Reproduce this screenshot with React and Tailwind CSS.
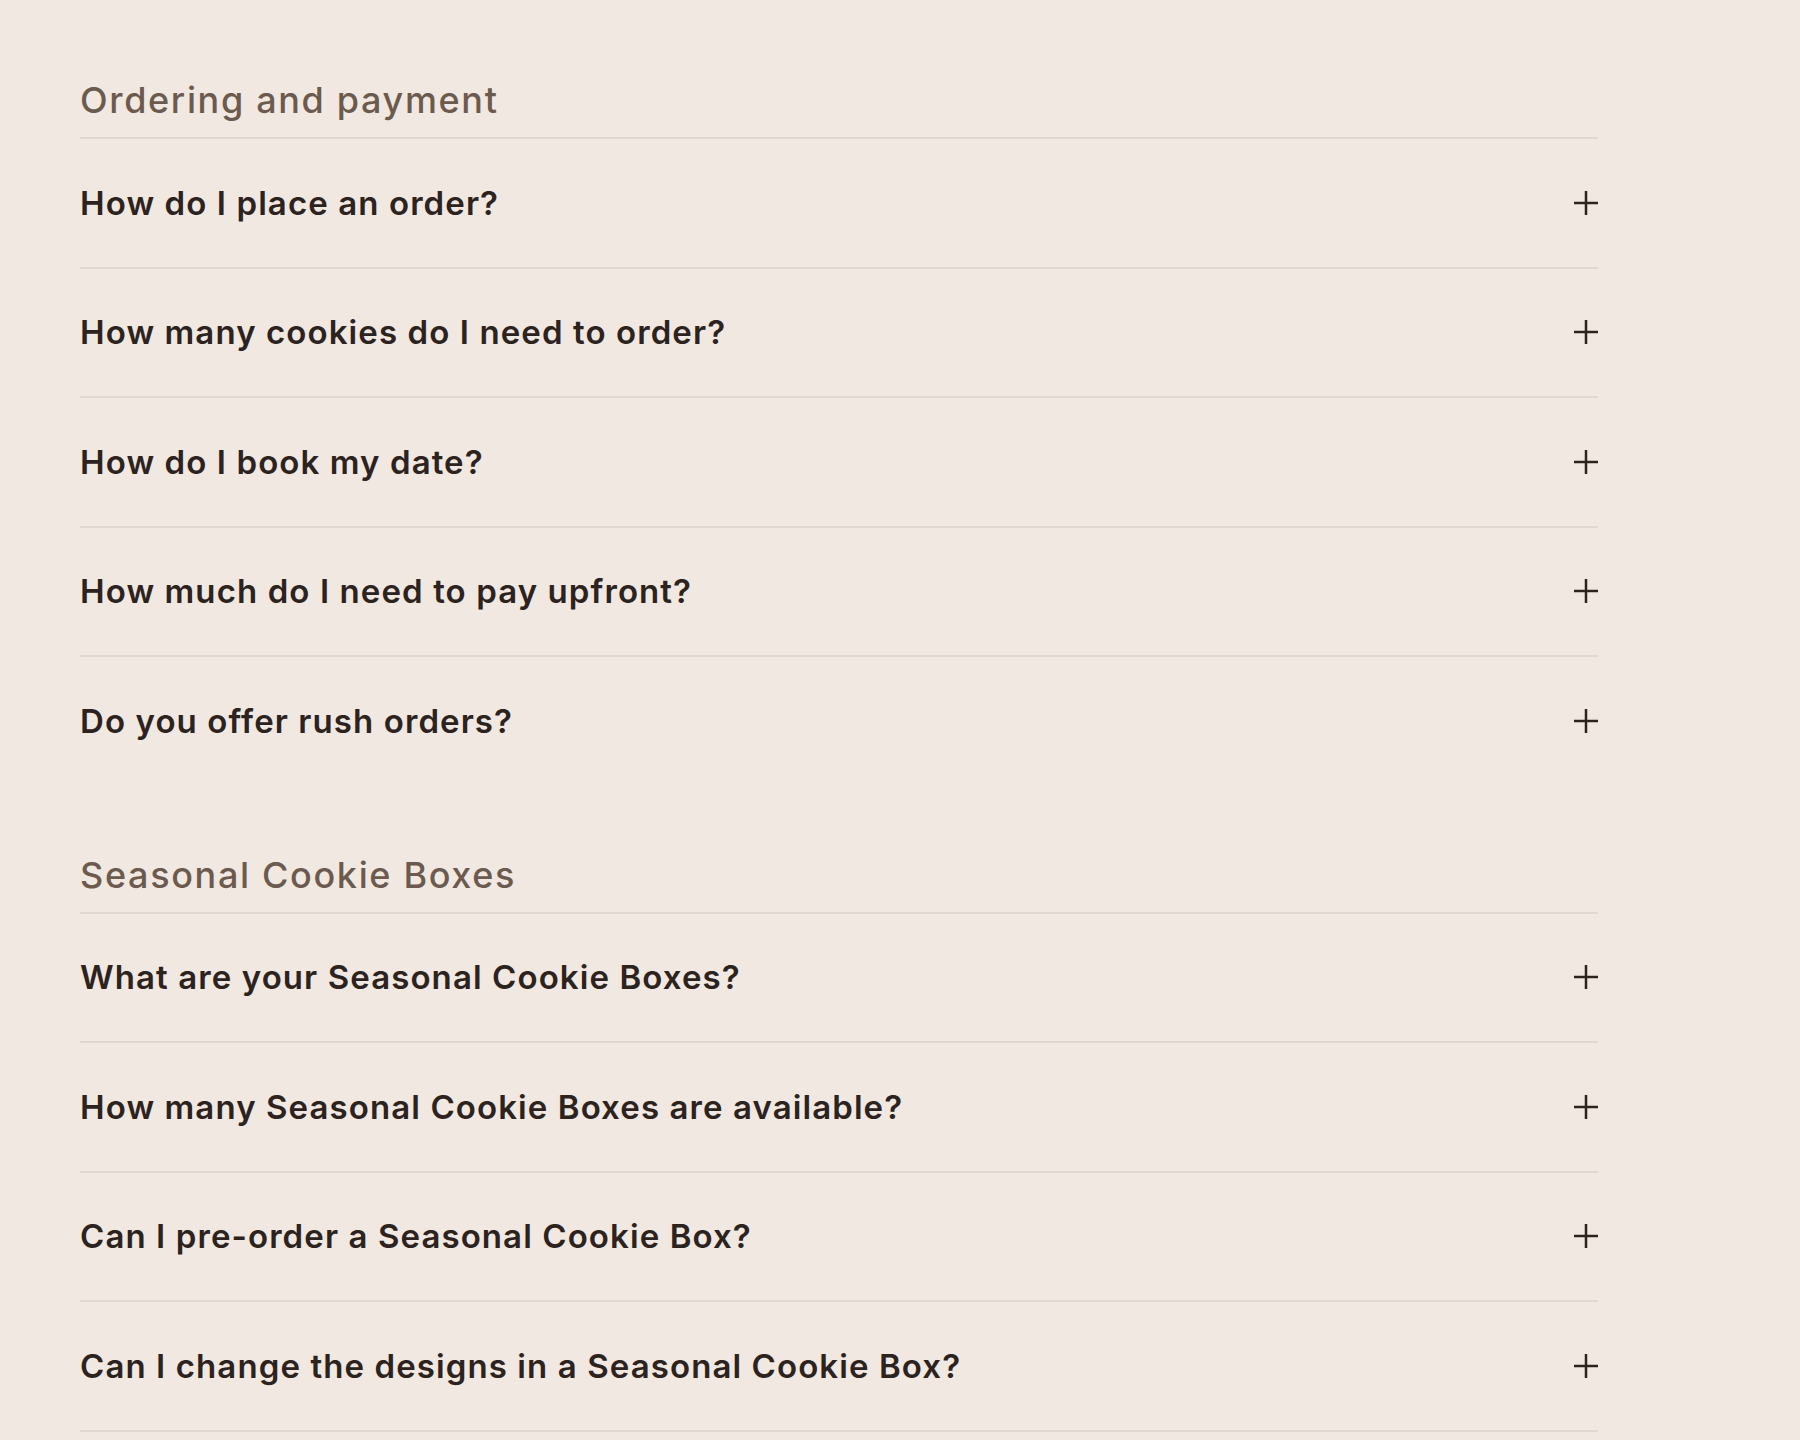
import React from 'react';

const sections = [
    {
        title: 'Ordering and payment',
        questions: [
            'How do I place an order?',
            'How many cookies do I need to order?',
            'How do I book my date?',
            'How much do I need to pay upfront?',
            'Do you offer rush orders?',
        ],
    },
    {
        title: 'Seasonal Cookie Boxes',
        questions: [
            'What are your Seasonal Cookie Boxes?',
            'How many Seasonal Cookie Boxes are available?',
            'Can I pre-order a Seasonal Cookie Box?',
            'Can I change the designs in a Seasonal Cookie Box?',
        ],
        closed: true,
    },
];

const PlusIcon = () => (
    <svg width="24" height="24" viewBox="0 0 24 24" fill="none" className="shrink-0 text-[#2d231e]">
        <path d="M0 12h24M12 0v24" stroke="currentColor" strokeWidth="2.5" />
    </svg>
);

const FaqRow = ({ question }) => (
    <button className="flex h-[129.5px] w-full items-center justify-between border-t-2 border-[#e0d7ce] text-left">
        <span className="text-[33px] font-semibold leading-[40px] tracking-[0.033em] text-[#2d231e]">{question}</span>
        <PlusIcon />
    </button>
);

const App = () => {
    return (
        <div className="min-h-screen bg-[#f0e8e1] font-['Inter',sans-serif]">
            <div className="w-[1518px] pl-[80px] pt-[80px] box-content">
                {sections.map((section, i) => (
                    <section key={section.title} className={i > 0 ? 'mt-[70px]' : ''}>
                        <h2 className="pb-[17px] text-[36px] font-medium leading-[40px] tracking-[0.046em] text-[#6b5a4d]">
                            {section.title}
                        </h2>
                        <div className={section.closed ? 'border-b-2 border-[#e0d7ce]' : ''}>
                            {section.questions.map(q => (
                                <FaqRow key={q} question={q} />
                            ))}
                        </div>
                    </section>
                ))}
            </div>
        </div>
    );
};

export default App;
